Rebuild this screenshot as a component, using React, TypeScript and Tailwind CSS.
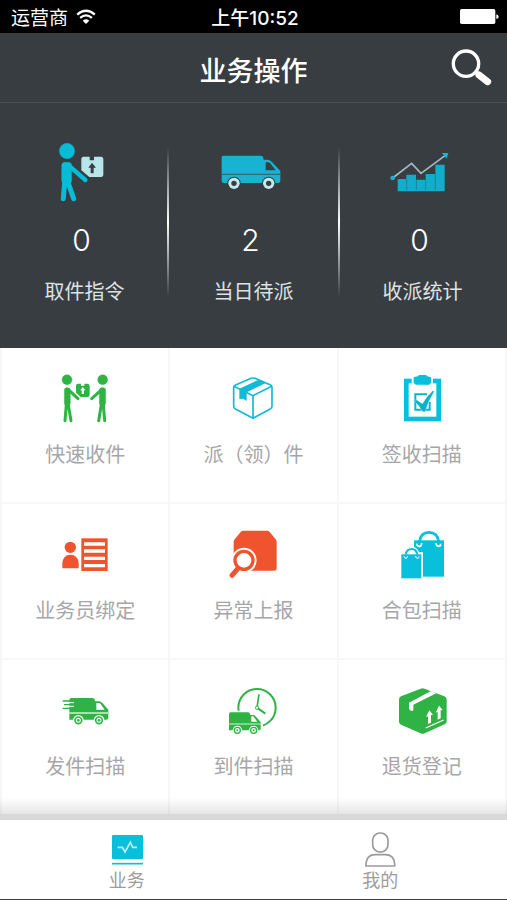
import type { ReactNode } from 'react';

type Item = {
  label: string;
  icon: ReactNode;
};

type Stat = Item & { count: number };

// ---- status bar / header icons ----

function WifiIcon() {
  return (
    <svg viewBox="225 28 60 46" className="w-5 h-[15px]" fill="none" stroke="#fff" strokeWidth="7">
      <path d="M228 45 Q255 22 282 45" />
      <path d="M237 55 Q255 40 273 55" />
      <path d="M245 64 Q255 55 265 64 L255 74 Z" fill="#fff" stroke="none" />
    </svg>
  );
}

function BatteryIcon() {
  return (
    <svg viewBox="617 30 117 45" className="w-[39px] h-[15px]" fill="#fff">
      <rect x="617" y="30" width="106" height="45" rx="5" />
      <path d="M726 46 Q733 48 733 53 Q733 58 726 60 Z" />
    </svg>
  );
}

function SearchIcon() {
  return (
    <svg viewBox="592 150 123 111" className="w-[41px] h-[37px]" fill="none" stroke="#fff">
      <circle cx="637" cy="194" r="38" strokeWidth="10" />
      <path d="M664 217 L676 227" strokeWidth="12" />
      <path d="M676 228 L702 248" strokeWidth="21" strokeLinecap="round" />
    </svg>
  );
}

// ---- summary icons ----

function PickupIcon() {
  return (
    <svg viewBox="86 34 135 180" className="w-[45px] h-[60px]">
      <g fill="#06bdd8" stroke="#06bdd8" strokeLinecap="round">
        <circle cx="110" cy="61" r="23" />
        <rect x="94" y="95" width="30" height="64" rx="10" />
        <path d="M115 104 L165 148" strokeWidth="13" fill="none" />
        <path d="M103 155 L99 204 M113 155 L130 204" strokeWidth="15" fill="none" />
      </g>
      <path
        d="M160 78 H178 V89 H191 V78 H212 Q219 78 219 86 V131 Q219 139 212 139 H177 L153 119 V86 Q153 78 160 78 Z"
        fill="#b7e6ea"
      />
      <path d="M185 96 L197 111 H190 V128 H181 V111 H174 Z" fill="#383d41" />
    </svg>
  );
}

function DeliveryVanIcon() {
  return (
    <svg viewBox="60 76 180 105" className="w-[60px] h-[35px]">
      <path
        d="M67 78 H180 Q187 78 188 90 H200 Q208 91 213 97 L238 124 V152 Q238 160 231 160 H68 Q62 160 62 153 V83 Q62 78 67 78 Z"
        fill="#17b3d0"
      />
      <path d="M62 134 H238" stroke="#2a6c7d" strokeWidth="4" />
      <path d="M194 98 H201 Q206 98 209 102 L224 122 H194 Z" fill="#383d41" />
      {[99, 203].map((cx) => (
        <g key={cx}>
          <circle cx={cx} cy="161" r="20" fill="#383d41" />
          <circle cx={cx} cy="161" r="17" fill="#c5e8ed" />
          <circle cx={cx} cy="161" r="8" fill="#383d41" />
        </g>
      ))}
    </svg>
  );
}

function ChartIcon() {
  return (
    <svg viewBox="62 64 177 120" className="w-[59px] h-[40px]">
      <path
        d="M85 145 H111 V132 H140 V147 H169 V130 H198 V102 H226 V182 H85 Z"
        fill="#10aecb"
      />
      <path d="M112 145 V178 M141 147 V178 M169 147 V178 M198 130 V178" stroke="#256c7e" strokeWidth="2" />
      <path d="M70 142 L127 98 L155 128 L228 74" fill="none" stroke="#a3b8be" strokeWidth="5" />
      <circle cx="70" cy="142" r="7" fill="#10b7d2" />
      <path d="M218 67 H237 L232 84 Z" fill="#10b7d2" />
    </svg>
  );
}

// ---- menu icons ----

function HandoverIcon() {
  return (
    <svg viewBox="182 99 150 150" className="size-[50px]">
      <g fill="#2fb344" stroke="#2fb344" strokeLinecap="round">
        <circle cx="203" cy="119" r="15" />
        <rect x="195" y="143" width="18" height="54" rx="7" />
        <path d="M207 149 L236 176" strokeWidth="9" />
        <path d="M201 194 L197 242 M207 194 L215 242" strokeWidth="9" />
        <circle cx="310" cy="119" r="15" />
        <rect x="300" y="143" width="19" height="54" rx="7" />
        <path d="M307 149 L277 176" strokeWidth="9" />
        <path d="M312 194 L316 242 M306 194 L298 242" strokeWidth="9" />
      </g>
      <path
        d="M235 131 H245 V137 H255 V131 H265 Q271 132 271 138 V164 Q271 171 264 171 H244 L230 158 V138 Q230 132 235 131 Z"
        fill="#2fb344"
      />
      <path d="M250 141 L258 151 H254 V162 H247 V151 H243 Z" fill="#fff" />
    </svg>
  );
}

function ParcelIcon() {
  return (
    <svg viewBox="175 99 150 150" className="size-[50px]">
      <g fill="none" stroke="#12bad6" strokeWidth="5" strokeLinejoin="round">
        <path d="M244 115 Q250 113 256 115 L303 135 Q307 137 307 142 V199 Q307 203 303 206 L250 235 L196 206 Q192 203 192 199 V142 Q192 138 196 136 Z" />
        <path d="M193 139 L250 167 L306 139 M250 167 V235" />
      </g>
      <path d="M209 146 L267 119 L288 129 L231 157 V183 L221 176 L209 177 Z" fill="#12bad6" />
    </svg>
  );
}

function ClipboardIcon() {
  return (
    <svg viewBox="678 99 150 150" className="size-[50px]">
      <rect x="706" y="123" width="97" height="114" fill="none" stroke="#08c0dc" strokeWidth="14" />
      <path d="M722 112 H786 V136 H722 Z" fill="#fff" />
      <path
        d="M728 114 Q728 110 734 110 Q742 110 744 105 H765 Q767 110 775 110 Q780 110 780 114 V128 L775 134 H734 L728 128 Z"
        fill="#08c0dc"
      />
      <path d="M768 163 H733 V209 H776 V186" fill="none" stroke="#08b3ce" strokeWidth="6" />
      <path
        d="M727 181 L738 180 L754 191 Q768 168 785 152 L790 154 Q772 182 762 216 L755 215 Q742 193 727 181 Z"
        fill="#08b3ce"
        stroke="#fff"
        strokeWidth="1"
      />
    </svg>
  );
}

function BindStaffIcon() {
  return (
    <svg viewBox="182 87 150 150" className="size-[50px]">
      <g fill="#f0542f">
        <circle cx="213" cy="142" r="17" />
        <path d="M189 205 V190 Q191 164 213 164 Q236 164 238 190 V205 Z" />
        <rect x="246" y="115" width="79" height="98" />
      </g>
      <path d="M254 132 H317 M254 153 H317 M254 175 H317 M254 197 H317" stroke="#fff" strokeWidth="10" />
    </svg>
  );
}

function AbnormalIcon() {
  return (
    <svg viewBox="175 87 150 150" className="size-[50px]">
      <path
        d="M221 92 H293 Q297 92 300 96 L318 118 Q321 122 321 126 V204 Q321 212 313 212 H192 V126 Q192 122 195 118 L213 96 Q216 92 221 92 Z"
        fill="#f0542f"
      />
      <path d="M206 203 L187 226" stroke="#fff" strokeWidth="24" />
      <circle cx="223" cy="181" r="38" fill="#fff" />
      <path d="M205 205 L187 226" stroke="#f0542f" strokeWidth="15" strokeLinecap="round" />
      <circle cx="223" cy="181" r="27" fill="#fff" stroke="#f0542f" strokeWidth="10" />
    </svg>
  );
}

function BagsIcon() {
  return (
    <svg viewBox="678 87 150 150" className="size-[50px]" fill="none">
      <rect x="729" y="121" width="90" height="109" fill="#08c0dc" />
      <path d="M746 124 Q749 97 774 97 Q799 97 803 124" stroke="#08c0dc" strokeWidth="8" />
      <path
        d="M737 131 Q738 139 745 139 Q752 139 752 129 M795 129 Q796 139 802 139 Q809 139 809 131"
        stroke="#fff"
        strokeWidth="5"
      />
      <path d="M686 157 H700 Q706 140 722 140 Q738 140 744 157 H756 V240 H686 Z" fill="#fff" />
      <rect x="691" y="163" width="60" height="72" fill="#08c0dc" />
      <path d="M704 164 Q707 147 722 147 Q736 147 739 164" stroke="#08c0dc" strokeWidth="6" />
      <path
        d="M699 169 Q700 175 705 175 Q709 175 709 168 M734 168 Q734 175 739 175 Q744 175 744 169"
        stroke="#fff"
        strokeWidth="3"
      />
    </svg>
  );
}

function SendVanIcon() {
  return (
    <svg viewBox="182 75 150 150" className="size-[50px]">
      <path
        d="M216 114 H280 Q286 114 287 124 H300 Q306 125 310 130 L327 149 V174 Q327 179 321 179 H210 V120 Q210 114 216 114 Z"
        fill="#2fb344"
      />
      <path d="M190 123 H215 M194 134 H215 M190 145 H215" stroke="#2fb344" strokeWidth="4" />
      <path d="M196 128 H224 M196 139 H224" stroke="#fff" strokeWidth="3" />
      <path d="M210 159 H327" stroke="#d5f0d8" strokeWidth="4" />
      <path d="M291 129 H299 Q302 129 304 132 L316 149 H291 Z" fill="#fff" />
      {[237, 299].map((cx) => (
        <g key={cx}>
          <circle cx={cx} cy="181" r="16" fill="#fff" />
          <circle cx={cx} cy="181" r="10" fill="none" stroke="#2fb344" strokeWidth="5" />
          <circle cx={cx} cy="181" r="4" fill="#2fb344" />
        </g>
      ))}
    </svg>
  );
}

function ArriveVanIcon() {
  return (
    <svg viewBox="175 75 150 150" className="size-[50px]">
      <circle cx="262" cy="143" r="56" fill="none" stroke="#2fb344" strokeWidth="6" />
      <path d="M171 152 H244 L280 178 V232 H171 Z" fill="#fff" />
      <path d="M262 143 L268 103" stroke="#2fb344" strokeWidth="5" />
      <path d="M262 143 L287 161" stroke="#2fb344" strokeWidth="6" />
      <circle cx="262" cy="143" r="5" fill="#fff" stroke="#2fb344" strokeWidth="3" />
      <path
        d="M183 157 H236 Q241 157 242 165 H251 Q256 166 259 170 L273 186 V207 Q273 211 268 211 H178 V162 Q178 157 183 157 Z"
        fill="#2fb344"
      />
      <path d="M178 192 H273" stroke="#d5f0d8" strokeWidth="3" />
      <path d="M245 169 H251 L263 185 H245 Z" fill="#fff" />
      {[203, 252].map((cx) => (
        <g key={cx}>
          <circle cx={cx} cy="211" r="14" fill="#fff" />
          <circle cx={cx} cy="211" r="9" fill="none" stroke="#2fb344" strokeWidth="4" />
          <circle cx={cx} cy="211" r="3" fill="#2fb344" />
        </g>
      ))}
    </svg>
  );
}

function ReturnBoxIcon() {
  return (
    <svg viewBox="678 75 150 150" className="size-[50px]">
      <path
        d="M749 86 Q755 83 761 86 L820 109 Q827 112 827 119 V184 Q827 190 821 193 L761 220 Q755 223 749 220 L690 194 Q684 191 684 185 V119 Q684 112 690 109 Z"
        fill="#2fb344"
      />
      <path d="M714 128 L780 93 L796 100 L727 134 V151 Q721 156 714 147 Z" fill="#fff" />
      <g fill="#fff">
        <path d="M775 151 L786 164 L780 165 V188 L771 192 V169 L765 171 Z" />
        <path d="M804 137 L815 150 L809 151 V175 L800 179 V155 L794 158 Z" />
      </g>
      <path d="M764 204 L818 180" stroke="#fff" strokeWidth="4" />
    </svg>
  );
}

// ---- tab bar icons ----

function WorkTabIcon() {
  return (
    <svg viewBox="327 96 108 108" className="size-9">
      <rect x="336" y="105" width="93" height="73" rx="4" fill="#09bfdc" />
      <path d="M353 142 H367 L375 156 L391 127 L398 142 H411" fill="none" stroke="#c4f3f9" strokeWidth="5" />
      <path d="M336 191 H429" stroke="#09bfdc" strokeWidth="5" />
    </svg>
  );
}

function MineTabIcon() {
  return (
    <svg viewBox="1087 96 108 108" className="size-9" fill="none" stroke="#9a9a9a" strokeWidth="5">
      <rect x="1119" y="99" width="46" height="57" rx="22" />
      <path d="M1099 198 V191 Q1101 164 1127 164 H1156 Q1183 164 1185 191 V198 Z" />
    </svg>
  );
}

const stats: Stat[] = [
  { label: '取件指令', count: 0, icon: <PickupIcon /> },
  { label: '当日待派', count: 2, icon: <DeliveryVanIcon /> },
  { label: '收派统计', count: 0, icon: <ChartIcon /> },
];

const menu: Item[] = [
  { label: '快速收件', icon: <HandoverIcon /> },
  { label: '派（领）件', icon: <ParcelIcon /> },
  { label: '签收扫描', icon: <ClipboardIcon /> },
  { label: '业务员绑定', icon: <BindStaffIcon /> },
  { label: '异常上报', icon: <AbnormalIcon /> },
  { label: '合包扫描', icon: <BagsIcon /> },
  { label: '发件扫描', icon: <SendVanIcon /> },
  { label: '到件扫描', icon: <ArriveVanIcon /> },
  { label: '退货登记', icon: <ReturnBoxIcon /> },
];

const tabs: Item[] = [
  { label: '业务', icon: <WorkTabIcon /> },
  { label: '我的', icon: <MineTabIcon /> },
];

export default function App() {
  return (
    <div className="min-h-screen flex flex-col bg-white font-[Inter,'Noto_Sans_CJK_SC',sans-serif]">
      {/* Status bar */}
      <div className="grid grid-cols-3 items-center h-[33px] pl-[11px] pr-2 bg-black text-white text-[19px] leading-6">
        <div className="flex items-center gap-2">
          <span className="pt-1">运营商</span>
          <WifiIcon />
        </div>
        <span className="pt-1 text-center whitespace-nowrap font-medium">上午10:52</span>
        <div className="flex justify-end">
          <BatteryIcon />
        </div>
      </div>

      {/* Header */}
      <header className="grid grid-cols-[1fr_auto_1fr] items-center h-[70px] px-[15px] bg-[#383d41] border-b border-[#4c5053]">
        <h1 className="col-start-2 pt-2 text-[27px] leading-9 font-medium text-white">业务操作</h1>
        <button aria-label="搜索" className="justify-self-end cursor-pointer">
          <SearchIcon />
        </button>
      </header>

      {/* Summary */}
      <section className="relative grid grid-cols-3 pt-[39px] pb-[41px] bg-[#383d41]">
        {stats.map((stat) => (
          <button key={stat.label} className="flex flex-col items-center gap-[18px] cursor-pointer">
            <span className="flex items-center justify-center h-[60px] pr-1.5">{stat.icon}</span>
            <span className="pr-1.5 text-3xl leading-10 font-light text-white">{stat.count}</span>
            <span className="text-xl leading-[29px] text-[#dfe2e3]">{stat.label}</span>
          </button>
        ))}
        <div className="absolute left-1/3 top-11 bottom-[51px] w-0.5 -ml-0.5 bg-linear-to-b from-transparent via-white to-transparent" />
        <div className="absolute left-2/3 top-11 bottom-[51px] w-0.5 bg-linear-to-b from-transparent via-white to-transparent" />
      </section>

      {/* Menu */}
      <main className="relative flex-1 grid grid-cols-3 auto-rows-fr pl-0.5 pb-1 bg-[#f7f7f7]">
        {menu.map((item) => (
          <button
            key={item.label}
            className="flex flex-col items-center gap-[18px] pt-[25px] pb-[30px] bg-white border-r-2 border-b-2 border-[#f7f7f7] cursor-pointer"
          >
            {item.icon}
            <span className="text-xl leading-[29px] text-[#a6a6a9]">{item.label}</span>
          </button>
        ))}
        <div className="absolute inset-x-0 bottom-0 flex flex-col pointer-events-none">
          <div className="h-4 bg-linear-to-b from-transparent to-black/10" />
          <div className="h-1.5 bg-[#d8d8d8]" />
        </div>
      </main>

      {/* Tab bar */}
      <nav className="grid grid-cols-2 pt-3 pb-1.5 bg-white border-b border-[#3c3c3c]">
        {tabs.map((tab) => (
          <button key={tab.label} className="flex flex-col items-center cursor-pointer">
            {tab.icon}
            <span className="pt-px text-lg leading-6 text-[#9c9c9c]">{tab.label}</span>
          </button>
        ))}
      </nav>
    </div>
  );
}
